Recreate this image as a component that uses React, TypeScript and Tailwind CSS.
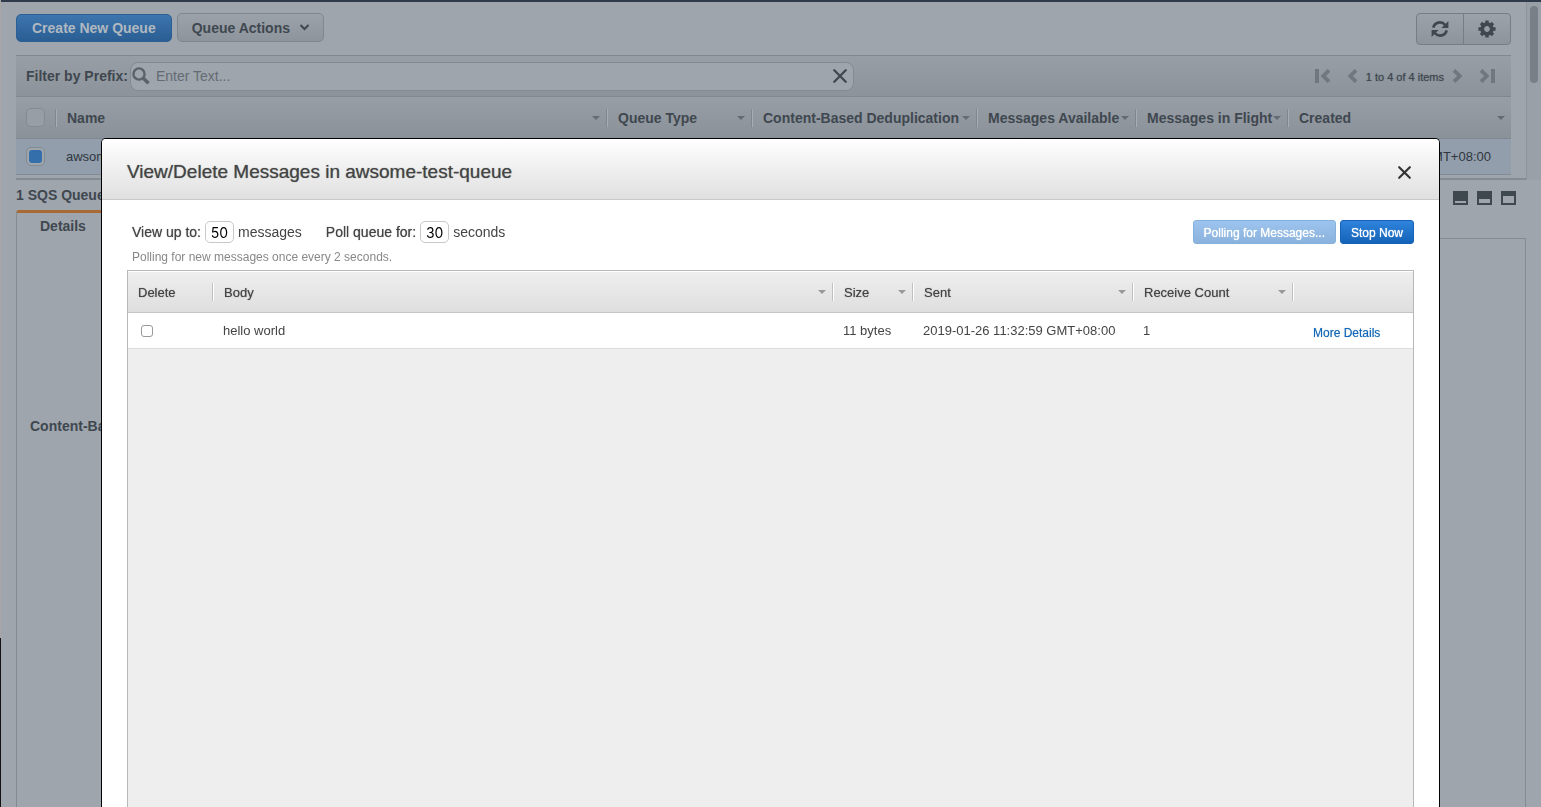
import React from 'react';

const SortCaret = ({ className = 'fill-[#999]' }: { className?: string }) => (
  <svg width="8" height="4" viewBox="0 0 8 4" className={`shrink-0 ${className}`} aria-hidden="true">
    <path d="M0 0h8L4 4z" />
  </svg>
);

const CloseIcon = ({ size }: { size: number }) => (
  <svg width={size} height={size} viewBox="0 0 14 14" fill="none" stroke="currentColor" strokeWidth="2.3" strokeLinecap="round">
    <path d="M1.3 1.3l11.4 11.4M12.7 1.3L1.3 12.7" />
  </svg>
);

const SearchIcon = () => (
  <svg width="18" height="18" viewBox="0 0 18 18" fill="none" stroke="currentColor" className="shrink-0 text-[#5a626a]">
    <circle cx="7" cy="7" r="5.6" strokeWidth="2.4" />
    <path d="M11.3 11.3l5.2 5" strokeWidth="3.4" />
  </svg>
);

const RefreshIcon = () => (
  <svg width="18" height="18" viewBox="0 0 18 18" fill="none" stroke="currentColor" strokeWidth="2.7">
    <path d="M2.3 7.6A6.8 6.8 0 0 1 14.2 5M15.7 10.4A6.8 6.8 0 0 1 3.8 13" />
    <path d="M17.4 1v7h-7zM.6 17v-7h7z" fill="currentColor" stroke="none" />
  </svg>
);

const GearIcon = () => (
  <svg width="18" height="18" viewBox="-9 -9 18 18" fill="none" stroke="currentColor">
    <circle r="4.8" strokeWidth="3.8" />
    <path d="M0-8.6v3M0 8.6v-3M-8.6 0h3M8.6 0h-3" strokeWidth="3.4" />
    <path d="M-6-6l2 2M6-6l-2 2M-6 6l2-2M6 6l-2-2" strokeWidth="3.4" />
  </svg>
);

const PagerIcon = ({ bar, flip }: { bar?: boolean; flip?: boolean }) => (
  <svg
    width={bar ? 16 : 11}
    height="14"
    viewBox={bar ? '0 0 16 14' : '5 0 11 14'}
    className={flip ? 'rotate-180' : ''}
    fill="none"
    stroke="#70787f"
  >
    {bar && <path d="M2 0v14" strokeWidth="4" />}
    <path d="M14 1.3L8.3 7l5.7 5.7" strokeWidth="3.8" />
  </svg>
);

const PaneIcon = ({ top }: { top: number }) => (
  <svg width="15" height="14" viewBox="0 0 15 14">
    <rect width="15" height="14" fill="#3f474f" />
    <rect x="2" y={top} width="11" height={12 - top} fill="#9ea5ad" />
  </svg>
);

interface QueueHeaderProps {
  label: string;
  width?: string;
}

const QueueHeader: React.FC<QueueHeaderProps> = ({ label, width = '' }) => (
  <th className={`h-[42px] border-b border-[#7f878f] p-0 text-left font-bold ${width}`}>
    <div className="flex h-[18px] items-center justify-between whitespace-nowrap border-l border-[#7f878f] pr-[6px] pl-[11px] shadow-[inset_1px_0_0_#a6adb5]">
      {label}
      <SortCaret className="fill-[#636b73]" />
    </div>
  </th>
);

interface MessageHeaderProps {
  label: string;
  width?: string;
  sortable?: boolean;
}

const MessageHeader: React.FC<MessageHeaderProps> = ({ label, width = '', sortable = true }) => (
  <th className={`h-[42px] border-b border-[#c4c4c4] p-0 text-left font-normal ${width}`}>
    <div className="flex h-[18px] items-center justify-between whitespace-nowrap border-l border-[#c0c0c0] pr-[6px] pl-[11px] shadow-[inset_1px_0_0_#fff]">
      <span className="pt-[2px] [text-shadow:0_0_1px_#777]">{label}</span>
      {sortable && <SortCaret />}
    </div>
  </th>
);

const QueueList = () => (
  <section className="flex text-[#3f474f]">
    <div className="ml-[15px] flex-1 border-b-2 border-[#838b93] pr-[15px] pb-[3px]">
      <div className="flex items-start justify-between py-[10px] pt-[11px]">
        <div className="flex items-end gap-[5px]">
          <button className="h-7 rounded-[5px] border border-[#2c5f94] bg-linear-to-b from-[#3d75ae] to-[#2a5e93] px-[15px] text-sm font-bold text-[#b0b8c0]">
            Create New Queue
          </button>
          <button className="flex h-[29px] items-center gap-[10px] rounded-[5px] border border-[#7f878f] bg-linear-to-b from-[#9ba2aa] to-[#8d949c] px-[14px] text-sm font-bold">
            Queue Actions
            <svg width="9" height="7" viewBox="0 0 9 7" fill="none" stroke="currentColor" strokeWidth="2">
              <path d="M.5 1l4 4 4-4" />
            </svg>
          </button>
        </div>
        <div className="flex h-8 rounded-[4px] border border-[#757d85] bg-linear-to-b from-[#9ba2aa] to-[#8d949c]">
          <button aria-label="Refresh" className="flex w-[47px] items-center justify-center border-r border-[#757d85]">
            <RefreshIcon />
          </button>
          <button aria-label="Settings" className="flex w-[46px] items-center justify-center">
            <GearIcon />
          </button>
        </div>
      </div>

      {/* Filter bar */}
      <div className="flex h-[42px] items-center justify-between border-y border-[#7f878f] bg-linear-to-b from-[#979ea6] to-[#8c939b] pr-4 pl-[10px]">
        <div className="flex items-center gap-[2px]">
          <label htmlFor="prefix" className="text-sm font-bold">
            Filter by Prefix:
          </label>
          <div className="flex h-[29px] w-[724px] items-center gap-[6px] rounded-lg border border-[#828a92] bg-[#9ea5ad] pr-[6px] pl-[1px]">
            <SearchIcon />
            <input
              id="prefix"
              placeholder="Enter Text..."
              className="min-w-0 flex-1 bg-transparent text-sm outline-none placeholder:text-[#636b73]"
            />
            <button aria-label="Clear filter">
              <CloseIcon size={14} />
            </button>
          </div>
        </div>
        <div className="flex items-center">
          <button aria-label="First page">
            <PagerIcon bar />
          </button>
          <button aria-label="Previous page" className="ml-4">
            <PagerIcon />
          </button>
          <span className="mx-2 pt-[2px] text-[11px] [text-shadow:0_0_1px_#5a626a]">1 to 4 of 4 items</span>
          <button aria-label="Next page">
            <PagerIcon flip />
          </button>
          <button aria-label="Last page" className="ml-4">
            <PagerIcon bar flip />
          </button>
        </div>
      </div>

      <table className="w-full table-fixed border-separate border-spacing-0 text-sm">
        <thead className="bg-linear-to-b from-[#979ea6] to-[#8a9199]">
          <tr>
            <th className="w-[39px] border-b border-[#7f878f] p-0">
              <input
                type="checkbox"
                aria-label="Select all queues"
                className="ml-[10px] block size-[19px] appearance-none rounded-[5px] border border-[#828a92] bg-[#979ea6]"
              />
            </th>
            <QueueHeader label="Name" />
            <QueueHeader label="Queue Type" width="w-[145px]" />
            <QueueHeader label="Content-Based Deduplication" width="w-[225px]" />
            <QueueHeader label="Messages Available" width="w-[159px]" />
            <QueueHeader label="Messages in Flight" width="w-[152px]" />
            <QueueHeader label="Created" width="w-[224px]" />
          </tr>
        </thead>
        <tbody className="bg-[#929eab] text-[13px] text-[#2f373f]">
          <tr className="h-9">
            <td className="border-b border-[#828a92] p-0">
              <input
                type="checkbox"
                aria-label="Select awsome-test-queue"
                defaultChecked
                className="ml-[10px] block size-[19px] appearance-none rounded-[5px] border border-[#828a92] bg-[#9ea5ad] p-[2px] before:block before:size-[13px] before:rounded-[3px] before:bg-[#346fab]"
              />
            </td>
            <td className="border-b border-[#828a92] pt-[2px] pl-[11px]">awsome-test-queue</td>
            <td className="border-b border-[#828a92] pt-[2px] pl-[11px]">Standard</td>
            <td className="border-b border-[#828a92] pt-[2px] pl-[11px]">N/A</td>
            <td className="border-b border-[#828a92] pt-[2px] pl-[11px]">1</td>
            <td className="border-b border-[#828a92] pt-[2px] pl-[11px]">0</td>
            <td className="border-b border-[#828a92] pt-[2px] pr-5 text-right whitespace-nowrap">2019-01-26 11:31:10 GMT+08:00</td>
          </tr>
        </tbody>
      </table>
    </div>
    {/* Scroll track */}
    <div className="w-[15px] border-l border-[#8d949c] bg-[#99a0a8] px-[3px] pt-1">
      <div className="h-[77px] w-2 rounded-full bg-[#777f87]" />
    </div>
  </section>
);

const QueueDetails = () => (
  <section className="flex flex-1 flex-col pr-[15px] pl-[15px] text-[#3f474f]">
    <div className="flex h-[30px] items-center justify-between pr-[10px] text-sm font-bold">
      <span>1 SQS Queue selected</span>
      <div className="flex gap-[9px] pt-[6px]">
        <button aria-label="Minimize pane">
          <PaneIcon top={10} />
        </button>
        <button aria-label="Split pane">
          <PaneIcon top={8} />
        </button>
        <button aria-label="Maximize pane">
          <PaneIcon top={5} />
        </button>
      </div>
    </div>
    <div className="flex">
      <button className="z-10 -mb-px h-[29px] rounded-t-[3px] border-x border-t-3 border-x-[#828a92] border-t-[#a76a35] bg-[#9ea5ad] px-[23px] text-sm font-bold">
        Details
      </button>
    </div>
    <div className="flex-1 border border-b-0 border-[#828a92] pt-[177px] pl-[13px]">
      <p className="text-sm font-bold">Content-Based Deduplication:</p>
    </div>
  </section>
);

const MessagesDialog = () => (
  <div className="fixed inset-0 z-20 flex px-[101px] pt-[138px]">
    <div
      role="dialog"
      aria-labelledby="dialog-title"
      className="flex flex-1 flex-col overflow-hidden rounded-t-[5px] border border-b-0 border-black bg-white text-[#444]"
    >
      <header className="flex h-[61px] items-center justify-between border-b border-[#c8c8c8] bg-linear-to-b from-white to-[#e0e0e0] px-[25px] pt-[6px]">
        <h1 id="dialog-title" className="text-[19px] [text-shadow:0_0_1px_#777]">
          View/Delete Messages in awsome-test-queue
        </h1>
        <button aria-label="Close" className="px-[3px] text-[#333]">
          <CloseIcon size={13} />
        </button>
      </header>

      <div className="flex flex-1 flex-col px-[25px] pt-5">
        <div className="flex items-start justify-between pl-[5px]">
          <div className="flex h-6 items-center text-sm">
            <label htmlFor="limit" className="[text-shadow:0_0_1px_#777]">
              View up to:
            </label>
            <input
              id="limit"
              defaultValue="50"
              className="mx-1 h-[22px] w-[29px] rounded-[5px] border border-[#c8c8c8] text-center font-['Inter',sans-serif] text-sm text-black"
            />
            <span>messages</span>
            <label htmlFor="duration" className="ml-6 [text-shadow:0_0_1px_#777]">
              Poll queue for:
            </label>
            <input
              id="duration"
              defaultValue="30"
              className="mx-1 h-[22px] w-[29px] rounded-[5px] border border-[#c8c8c8] text-center font-['Inter',sans-serif] text-sm text-black"
            />
            <span>seconds</span>
          </div>
          <div className="flex gap-1 text-xs text-white">
            <button
              disabled
              className="h-6 rounded-[3px] border border-[#86b1dd] bg-linear-to-b from-[#9cc4ee] to-[#8ab2dc] px-[10px] pt-px [text-shadow:0_0_1px_#fff]"
            >
              Polling for Messages...
            </button>
            <button className="h-6 rounded-[3px] border border-[#1562b8] bg-linear-to-b from-[#2e83dc] to-[#1463b8] px-[10px] pt-px [text-shadow:0_0_1px_#fff]">
              Stop Now
            </button>
          </div>
        </div>
        <p className="mt-1 pl-[5px] text-xs leading-[18px] text-[#888]">Polling for new messages once every 2 seconds.</p>

        <div className="mt-1 flex-1 border border-b-0 border-[#b8b8b8] bg-[#eee]">
          <table className="w-full table-fixed border-separate border-spacing-0 text-[13px]">
            <thead className="bg-linear-to-b from-[#efefef] to-[#dedede] shadow-[inset_0_1px_0_#fff]">
              <tr>
                <th className="w-[84px] border-b border-[#c4c4c4] p-0 pt-[2px] pl-[10px] text-left font-normal">
                  <span className="[text-shadow:0_0_1px_#777]">Delete</span>
                </th>
                <MessageHeader label="Body" />
                <MessageHeader label="Size" width="w-[80px]" />
                <MessageHeader label="Sent" width="w-[220px]" />
                <MessageHeader label="Receive Count" width="w-[160px]" />
                <MessageHeader label="" width="w-[121px]" sortable={false} />
              </tr>
            </thead>
            <tbody className="bg-white">
              <tr className="h-9">
                <td className="border-b border-[#dcdcdc] p-0">
                  <input
                    type="checkbox"
                    aria-label="Delete hello world"
                    className="ml-[13px] block size-3 appearance-none rounded-[3px] border border-[#999] bg-white"
                  />
                </td>
                <td className="border-b border-[#dcdcdc] p-0 pl-[11px]">hello world</td>
                <td className="border-b border-[#dcdcdc] p-0 pl-[11px] whitespace-nowrap">11 bytes</td>
                <td className="border-b border-[#dcdcdc] p-0 pl-[11px] whitespace-nowrap">2019-01-26 11:32:59 GMT+08:00</td>
                <td className="border-b border-[#dcdcdc] p-0 pl-[11px]">1</td>
                <td className="border-b border-[#dcdcdc] p-0 pt-1 pl-[21px]">
                  <a href="#details" className="text-xs text-[#1166bb] [text-shadow:0_0_1px_#7ab]">
                    More Details
                  </a>
                </td>
              </tr>
            </tbody>
          </table>
        </div>
      </div>
    </div>
  </div>
);

const App: React.FC = () => {
  return (
    <div className="flex h-screen overflow-hidden bg-[#9ea5ad] font-['Liberation_Sans',Arial,sans-serif]">
      <div className="flex w-px flex-col">
        <div className="flex-[638] bg-[#a9a6a4]"></div>
        <div className="flex-[169] bg-[#141214]"></div>
      </div>
      <main className="flex min-w-0 flex-1 flex-col border-t-2 border-[#2f3a4a]">
        <QueueList />
        <QueueDetails />
      </main>
      <MessagesDialog />
    </div>
  );
};

export default App;
